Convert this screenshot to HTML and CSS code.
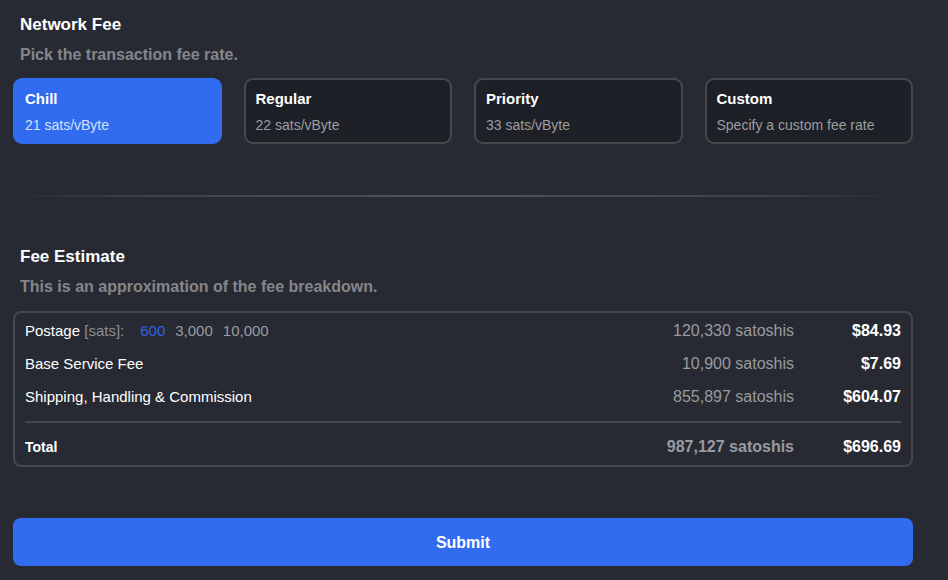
FILE: index.html
```html
<!DOCTYPE html>
<html>
<head>
<meta charset="utf-8">
<link rel="stylesheet" href="styles.css">
</head>
<body>
<div class="page">
  <section class="section">
    <h2 class="title">Network Fee</h2>
    <p class="subtitle">Pick the transaction fee rate.</p>
    <div class="cards">
      <div class="card active">
        <div class="card-title">Chill</div>
        <div class="card-sub">21 sats/vByte</div>
      </div>
      <div class="card">
        <div class="card-title">Regular</div>
        <div class="card-sub">22 sats/vByte</div>
      </div>
      <div class="card">
        <div class="card-title">Priority</div>
        <div class="card-sub">33 sats/vByte</div>
      </div>
      <div class="card">
        <div class="card-title">Custom</div>
        <div class="card-sub">Specify a custom fee rate</div>
      </div>
    </div>
  </section>

  <div class="divider"></div>

  <section class="section">
    <h2 class="title">Fee Estimate</h2>
    <p class="subtitle">This is an approximation of the fee breakdown.</p>
    <div class="table">
      <div class="row">
        <div class="label">Postage <span class="muted">[sats]:</span>
          <span class="options"><span class="opt selected">600</span><span class="opt">3,000</span><span class="opt">10,000</span></span>
        </div>
        <div class="sats">120,330 satoshis</div>
        <div class="usd">$84.93</div>
      </div>
      <div class="row">
        <div class="label">Base Service Fee</div>
        <div class="sats">10,900 satoshis</div>
        <div class="usd">$7.69</div>
      </div>
      <div class="row">
        <div class="label">Shipping, Handling &amp; Commission</div>
        <div class="sats">855,897 satoshis</div>
        <div class="usd">$604.07</div>
      </div>
      <div class="rule"></div>
      <div class="row total">
        <div class="label">Total</div>
        <div class="sats">987,127 satoshis</div>
        <div class="usd">$696.69</div>
      </div>
    </div>
  </section>

  <button class="submit">Submit</button>
</div>
</body>
</html>
```

FILE: styles.css
```css
* { box-sizing: border-box; }

html, body {
  margin: 0;
  padding: 0;
  background: #272a33;
}

body {
  font-family: "Liberation Sans", Arial, Helvetica, sans-serif;
  color: #ffffff;
  -webkit-font-smoothing: antialiased;
}

.page {
  width: 948px;
  height: 580px;
  padding: 15px 35px 0 13px;
  display: flex;
  flex-direction: column;
}

.title {
  margin: 0;
  padding-left: 7px;
  font-size: 17px;
  line-height: 20px;
  font-weight: 700;
  color: #ffffff;
}

.subtitle {
  margin: 10px 0 0;
  padding-left: 7px;
  font-size: 16px;
  line-height: 20px;
  font-weight: 700;
  color: #85868a;
}

.cards {
  margin-top: 13px;
  width: 900px;
  display: grid;
  grid-template-columns: repeat(4, 1fr);
  column-gap: 22px;
}

.card {
  height: 66px;
  border: 2px solid #47484c;
  border-radius: 9px;
  background: #1e2027;
  padding: 10px 10px 0;
}

.card.active {
  background: #316cf0;
  border-color: #316cf0;
}

.card-title {
  font-size: 15px;
  line-height: 18px;
  font-weight: 700;
  color: #ffffff;
}

.card-sub {
  margin-top: 9px;
  font-size: 14px;
  line-height: 16px;
  color: #9c9da1;
}

.card.active .card-sub {
  color: #d6e0fb;
}

.divider {
  margin: 51px 0 0 -3px;
  width: 890px;
  height: 2px;
  background: linear-gradient(90deg, rgba(80,80,84,0) 0%, rgba(80,80,84,0.6) 15%, #525256 50%, rgba(80,80,84,0.6) 85%, rgba(80,80,84,0) 100%);
}

.divider + .section {
  margin-top: 50px;
}

.table {
  margin-top: 14px;
  border: 2px solid #47484c;
  border-radius: 8px;
  padding: 1px 10px 2px;
  width: 900px;
}

.row {
  display: grid;
  grid-template-columns: 1fr auto 107px;
  align-items: center;
  height: 33px;
  font-size: 15px;
  line-height: 18px;
}

.label {
  color: #ffffff;
  display: flex;
  align-items: center;
  white-space: pre;
}

.muted {
  color: #8e8f93;
}

.options {
  display: flex;
  gap: 10px;
  margin-left: 16px;
}

.opt {
  color: #9a9b9f;
}

.opt.selected {
  color: #2d63e6;
}

.sats {
  color: #9a9b9f;
  text-align: right;
  font-size: 16px;
}

.usd {
  color: #ffffff;
  text-align: right;
  font-weight: 700;
  font-size: 16px;
}

.rule {
  height: 2px;
  background: #46474b;
  margin: 8px 0 7px;
}

.total .label {
  font-weight: 700;
  font-size: 14px;
}

.total .sats {
  font-weight: 700;
}

.submit {
  margin-top: 51px;
  width: 900px;
  height: 48px;
  padding-top: 2px;
  border: none;
  border-radius: 8px;
  background: #316cf0;
  color: #ffffff;
  font-family: "Liberation Sans", Arial, Helvetica, sans-serif;
  font-size: 16px;
  font-weight: 700;
  cursor: pointer;
}
```
